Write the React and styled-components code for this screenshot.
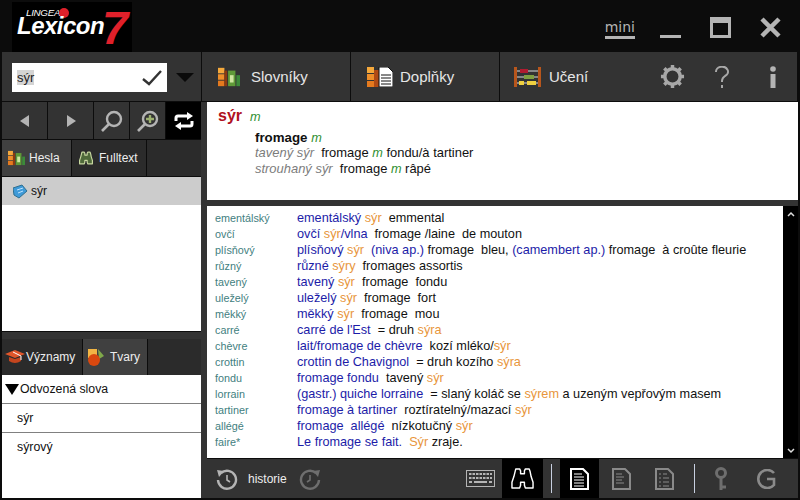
import React from "react";
import styled, { createGlobalStyle } from "styled-components";

const GlobalStyle = createGlobalStyle`
  html, body { margin: 0; padding: 0; background: #0c0c0c; }
  body { font-family: "Liberation Sans", Arial, sans-serif; }
`;

const Window = styled.div`
  width: 800px;
  height: 500px;
  overflow: hidden;
  background: #0c0c0c;
  display: flex;
  flex-direction: column;
`;

const TitleBar = styled.header`
  height: 52px;
  flex: none;
  display: flex;
  align-items: flex-start;
  padding-left: 12px;
`;

const Logo = styled.div`
  position: relative;
  width: 120px;
  height: 50px;
  margin-top: 2px;
  background: #000;
  color: #fff;
  font-style: italic;
  font-weight: bold;
`;

const LogoSmall = styled.span`
  position: absolute;
  left: 14px;
  top: 6px;
  font-size: 9.8px;
  line-height: 9px;
  font-weight: normal;
  letter-spacing: -0.3px;
`;

const LogoDot = styled.span`
  position: absolute;
  left: 47px;
  top: 6px;
  width: 10px;
  height: 10px;
  border-radius: 50%;
  background: #e0202a;
`;

const LogoName = styled.span`
  position: absolute;
  left: 5px;
  top: 15px;
  font-size: 24px;
  letter-spacing: -0.5px;
  line-height: 18px;
`;

const LogoSeven = styled.span`
  position: absolute;
  left: 90px;
  top: 9px;
  font-size: 47px;
  line-height: 33px;
  color: #e0202a;
`;

const WindowButtons = styled.div`
  margin-left: auto;
  display: flex;
  align-items: center;
  height: 54px;
  padding-right: 19px;
  gap: 29px;
`;

const Mini = styled.span`
  color: #b4b4b4;
  font: 14px "DejaVu Sans", sans-serif;
  line-height: 15px;
  padding-bottom: 1px;
  border-bottom: 3px solid #b4b4b4;
  margin-top: 4px;
  margin-right: -4px;
`;

const Body = styled.div`
  flex: none;
  height: 446px;
  width: 798px;
  margin-left: 2px;
  display: flex;
`;

const Side = styled.aside`
  width: 199px;
  flex: none;
  display: flex;
  flex-direction: column;
  background: #333;
`;

const SearchRow = styled.div`
  height: 49px;
  flex: none;
  display: flex;
  align-items: center;
  padding-left: 10px;
  gap: 9px;
  border-bottom: 1px solid #0c0c0c;
`;

const SearchBox = styled.div`
  width: 155px;
  height: 29px;
  background: #fff;
  display: flex;
  align-items: center;
  justify-content: space-between;
  padding: 0 5px;
  box-sizing: border-box;
  font-size: 13px;
  margin-top: 2px;
`;

const Selected = styled.span`
  background: #d4d4d4;
  color: #222;
`;

const DownArrow = styled.span`
  width: 0;
  height: 0;
  border-left: 9px solid transparent;
  border-right: 9px solid transparent;
  border-top: 9px solid #0a0a0a;
  margin-top: 2px;
`;

const NavRow = styled.div`
  height: 37px;
  flex: none;
  display: flex;
  border-bottom: 1px solid #0c0c0c;
`;

const NavButton = styled.div`
  width: ${(p) => p.$w}px;
  flex: none;
  display: flex;
  align-items: center;
  justify-content: center;
  box-sizing: border-box;
  background: ${(p) => (p.$active ? "#000" : "#333")};
  border-right: ${(p) => (p.$active ? "0" : "1px solid #0c0c0c")};
`;

const Tabs = styled.div`
  height: 36px;
  flex: none;
  display: flex;
  background: #2b2b2b;
`;

const Tab = styled.div`
  width: ${(p) => p.$w}px;
  flex: none;
  box-sizing: border-box;
  display: flex;
  align-items: center;
  gap: ${(p) => p.$gap ?? 6}px;
  padding-left: ${(p) => p.$pad ?? 6}px;
  color: #eee;
  font-size: 12px;
  background: ${(p) => (p.$on ? "#404040" : "#2b2b2b")};
  border-right: 1px solid #0c0c0c;
`;

const ListPane = styled.div`
  height: 156px;
  flex: none;
  background: #fff;
  border-top: 1px solid #0c0c0c;
  border-bottom: 1px solid #0c0c0c;
  box-sizing: border-box;
`;

const SelectedRow = styled.div`
  height: 28px;
  background: #ccc;
  display: flex;
  align-items: center;
  gap: 3px;
  padding-left: 11px;
  font-size: 12px;
  color: #111;
`;

const SideGap = styled.div`
  height: 7px;
  flex: none;
`;

const LowerList = styled.div`
  flex: 1;
  background: #fff;
  font-size: 12.3px;
  color: #111;
`;

const LowerRow = styled.div`
  height: 28px;
  display: flex;
  align-items: center;
  gap: 1px;
  padding-left: ${(p) => p.$pad}px;
  border-bottom: ${(p) => (p.$last ? "0" : "1px solid #808080")};
`;

const TriangleDown = styled.span`
  width: 0;
  height: 0;
  border-left: 7px solid transparent;
  border-right: 7px solid transparent;
  border-top: 11px solid #000;
  margin-left: -1px;
`;

const Main = styled.main`
  flex: 1;
  min-width: 0;
  display: flex;
  flex-direction: column;
`;

const Toolbar = styled.nav`
  height: 50px;
  flex: none;
  width: 596px;
  display: flex;
  align-items: center;
  background: #333;
  border-left: 1px solid #0c0c0c;
  box-sizing: border-box;
  border-bottom: 1px solid #0c0c0c;
`;

const ToolButton = styled.div`
  width: 149px;
  height: 49px;
  box-sizing: border-box;
  display: flex;
  align-items: center;
  gap: ${(p) => p.$gap}px;
  padding-left: ${(p) => p.$pad}px;
  color: #e6e6e6;
  font-size: 15px;
  border-right: ${(p) => (p.$last ? "0" : "1px solid #0c0c0c")};
`;

const ToolIcons = styled.div`
  margin-left: auto;
  display: flex;
  align-items: center;
  padding-right: 21px;
  gap: 29px;
  svg:last-child { margin-left: 11px; }
`;

const Panes = styled.div`
  flex: 1;
  min-height: 0;
  width: 597px;
  box-sizing: border-box;
  display: flex;
  flex-direction: column;
  padding-left: 6px;
  background: #333;
`;

const EntryPane = styled.section`
  height: 98px;
  width: 591px;
  flex: none;
  background: #fff;
  box-sizing: border-box;
  padding: 5px 0 0 11px;
  font-size: 13px;
  color: #111;
  margin-bottom: 6px;
`;

const HeadWord = styled.div`
  display: flex;
  align-items: baseline;
  gap: 8px;
  height: 23px;
  font-size: 16px;
  font-weight: bold;
  color: #b01020;
`;

const Gender = styled.i`
  color: #2f8f2f;
  font-size: 12.7px;
  font-weight: normal;
`;

const EntryLine = styled.div`
  height: 16px;
  line-height: 16px;
  padding-left: 37px;
  white-space: pre;
  font-size: ${(p) => (p.$big ? 13.3 : 12.95)}px;
  font-weight: ${(p) => (p.$big ? "bold" : "normal")};
  position: relative;
  top: ${(p) => (p.$big ? 0 : -1)}px;
`;

const Gray = styled.i`
  color: #7c7c7c;
`;

const ResultsWrap = styled.section`
  height: 252px;
  flex: none;
  display: flex;
`;

const Results = styled.div`
  flex: 1;
  background: #fff;
  padding: 4px 0 0 8px;
  overflow: hidden;
`;

const ResultRow = styled.div`
  height: 16px;
  line-height: 16px;
  display: grid;
  grid-template-columns: 82px 1fr;
  white-space: pre;
  font-size: 12.7px;
  color: #111;
`;

const Word = styled.span`
  color: #3f8080;
  font-size: 10.8px;
`;

const Blue = styled.span`
  color: #1c1ca8;
`;

const Org = styled.span`
  color: #e8963c;
`;

const Scrollbar = styled.div`
  width: 15px;
  flex: none;
  background: #000;
  display: flex;
  flex-direction: column;
  align-items: center;
  justify-content: space-between;
  padding: 5px 0 4px;
  box-sizing: border-box;
  color: #ddd;
`;

const StatusBar = styled.footer`
  flex: none;
  height: 40px;
  width: 591px;
  display: flex;
  align-items: stretch;
  background: #333;
  border-top: 1px solid #0c0c0c;
  box-sizing: border-box;
  padding: 0 5px 0 9px;
  color: #eee;
  font-size: 12px;
`;

const StatusItem = styled.div`
  display: flex;
  align-items: center;
  justify-content: center;
  width: ${(p) => p.$w}px;
  flex: none;
  margin-left: ${(p) => p.$ml ?? 0}px;
  background: ${(p) => (p.$active ? "#000" : "transparent")};
`;

const HistoryLabel = styled.span`
  width: 51px;
  display: flex;
  align-items: center;
  flex: none;
  margin-left: 10px;
`;

const Divider = styled.span`
  width: 1px;
  flex: none;
  background: #c8d0e0;
  margin: 5px 8px;
`;

const Spacer = styled.div`
  flex: 1;
`;

const Books = ({ w = 22, h = 20 }) => (
  <svg width={w} height={h} viewBox="0 0 24 20">
    <rect x="0" y="0" width="7" height="6" fill="#f5a93c" />
    <rect x="0" y="7" width="7" height="6" fill="#ef8f2a" />
    <rect x="0" y="14" width="7" height="6" fill="#e57a1e" />
    <rect x="7" y="3" width="3" height="17" fill="#8c3a10" />
    <rect x="11" y="3" width="8" height="17" fill="#5f9a38" />
    <rect x="13" y="8" width="4" height="8" fill="#cfe6a0" />
    <rect x="20" y="8" width="4" height="12" fill="#3d8a3a" />
  </svg>
);

const BooksDoc = () => (
  <svg width="26" height="20" viewBox="0 0 26 20">
    <rect x="0" y="0" width="7" height="6" fill="#f5a93c" />
    <rect x="0" y="7" width="7" height="6" fill="#ef8f2a" />
    <rect x="0" y="14" width="7" height="6" fill="#e57a1e" />
    <rect x="7" y="3" width="5" height="17" fill="#b04a14" />
    <path d="M12 0h9l5 5v15H12z" fill="#fff" stroke="#111" />
    <path d="M14 8h10M14 11h10M14 14h10M14 17h10" stroke="#111" />
  </svg>
);

const Abacus = () => (
  <svg width="27" height="20" viewBox="0 0 27 20">
    <rect x="0" y="0" width="3" height="20" fill="#b8561c" />
    <rect x="24" y="0" width="3" height="20" fill="#b8561c" />
    <path d="M3 4h21M3 10h21M3 16h21" stroke="#ddd" />
    <rect x="6" y="2" width="8" height="4" fill="#b01c30" />
    <rect x="10" y="8" width="10" height="4" fill="#7fa040" />
    <rect x="5" y="14" width="5" height="4" fill="#f0d040" />
    <rect x="13" y="14" width="9" height="4" fill="#f0d040" />
  </svg>
);

const Binoculars = ({ color, size, line, sw }) => (
  <svg width={size} height={size} viewBox="0 0 24 24" fill={color} stroke={line} strokeWidth={sw} strokeLinejoin="round">
    <path d="M5 2h4l1 2v3h4V4l1-2h4l1 3 1 5 2 6v6h-8l-1-3v-3h-4v3l-1 3H1v-6l2-6z" />
  </svg>
);

const Lens = ({ plus }) => (
  <svg width="24" height="24" viewBox="0 0 24 24" fill="none">
    <circle cx="14" cy="10" r="7" stroke="#b4b4b4" strokeWidth="2.4" />
    {plus && <path d="M14 6v8M10 10h8" stroke="#9cb070" strokeWidth="2.4" />}
    <path d="M9 15 2 22" stroke="#b4b4b4" strokeWidth="2.6" />
  </svg>
);

const Doc = ({ color, lines }) => (
  <svg width="19" height="22" viewBox="0 0 19 22" fill="none">
    <path d="M1 1h12l5 5v15H1z" stroke={color} strokeWidth="2" />
    <path d={lines} stroke={color} strokeWidth="1" />
  </svg>
);

const Clock = ({ color, flip }) => (
  <svg width="22" height="22" viewBox="0 0 22 22" fill="none" style={flip ? { transform: "scaleX(-1)" } : undefined}>
    <path d="M5 5a9 9 0 1 1-3 7" stroke={color} strokeWidth="2.4" />
    <path d="M1 2l7 1-5 6z" fill={color} />
    <path d="M11 7v5l3 2" stroke={color} strokeWidth="1.6" />
  </svg>
);

const rows = [
  ["ementálský", <><Blue>ementálský </Blue><Org>sýr</Org>  emmental</>],
  ["ovčí", <><Blue>ovčí </Blue><Org>sýr</Org><Blue>/vlna</Blue>  fromage /laine  de mouton</>],
  ["plísňový", <><Blue>plísňový </Blue><Org>sýr</Org>  <Blue>(niva ap.) </Blue>fromage  bleu, <Blue>(camembert ap.) </Blue>fromage  à croûte fleurie</>],
  ["různý", <><Blue>různé </Blue><Org>sýry</Org>  fromages assortis</>],
  ["tavený", <><Blue>tavený </Blue><Org>sýr</Org>  fromage  fondu</>],
  ["uleželý", <><Blue>uleželý </Blue><Org>sýr</Org>  fromage  fort</>],
  ["měkký", <><Blue>měkký </Blue><Org>sýr</Org>  fromage  mou</>],
  ["carré", <><Blue>carré de l'Est</Blue>  = druh <Org>sýra</Org></>],
  ["chèvre", <><Blue>lait/fromage de chèvre</Blue>  kozí mléko/<Org>sýr</Org></>],
  ["crottin", <><Blue>crottin de Chavignol</Blue>  = druh kozího <Org>sýra</Org></>],
  ["fondu", <><Blue>fromage fondu</Blue>  tavený <Org>sýr</Org></>],
  ["lorrain", <><Blue>(gastr.) quiche lorraine</Blue>  = slaný koláč se <Org>sýrem</Org> a uzeným vepřovým masem</>],
  ["tartiner", <><Blue>fromage à tartiner</Blue>  roztíratelný/mazací <Org>sýr</Org></>],
  ["allégé", <><Blue>fromage  allégé</Blue>  nízkotučný <Org>sýr</Org></>],
  ["faire*", <><Blue>Le fromage se fait.</Blue>  <Org>Sýr</Org> zraje.</>],
];

const App = () => {
  return (
    <Window>
      <GlobalStyle />
      <TitleBar>
        <Logo>
          <LogoSmall>LINGEA</LogoSmall>
          <LogoDot />
          <LogoName>Lexicon</LogoName>
          <LogoSeven>7</LogoSeven>
        </Logo>
        <WindowButtons>
          <Mini>mini</Mini>
          <svg width="21" height="21" viewBox="0 0 21 21"><rect y="18" width="21" height="3" fill="#b4b4b4" /></svg>
          <svg width="21" height="21" viewBox="0 0 21 21"><path d="M0 0h21v21H0z" fill="#b4b4b4" /><rect x="3" y="6" width="15" height="12" fill="#0c0c0c" /></svg>
          <svg width="21" height="21" viewBox="0 0 21 21"><path d="M2 2l17 17M19 2 2 19" stroke="#b4b4b4" strokeWidth="4.5" /></svg>
        </WindowButtons>
      </TitleBar>
      <Body>
        <Side>
          <SearchRow>
            <SearchBox>
              <span><Selected>sýr</Selected></span>
              <svg width="20" height="16" viewBox="0 0 20 16" fill="none"><path d="M1 9l6 5L19 1" stroke="#333" strokeWidth="2.4" /></svg>
            </SearchBox>
            <DownArrow />
          </SearchRow>
          <NavRow>
            <NavButton $w={46}>
              <svg width="10" height="12" viewBox="0 0 10 12"><path d="M9 0v12L0 6z" fill="#b4b4b4" /></svg>
            </NavButton>
            <NavButton $w={46}>
              <svg width="10" height="12" viewBox="0 0 10 12"><path d="M1 0v12l9-6z" fill="#b4b4b4" /></svg>
            </NavButton>
            <NavButton $w={36}><Lens /></NavButton>
            <NavButton $w={36}><Lens plus /></NavButton>
            <NavButton $w={35} $active>
              <svg width="20" height="18" viewBox="0 0 20 18" fill="none">
                <path d="M2 9V6q0-2 2-2h10" stroke="#fff" strokeWidth="3" />
                <path d="M13 0l6 4-6 4z" fill="#fff" />
                <path d="M18 9v3q0 2-2 2H6" stroke="#fff" strokeWidth="3" />
                <path d="M7 10l-6 4 6 4z" fill="#fff" />
              </svg>
            </NavButton>
          </NavRow>
          <Tabs>
            <Tab $w={70} $on $gap={4}><Books w={17} h={16} />Hesla</Tab>
            <Tab $w={75} $pad={7} $gap={6}><Binoculars color="#4f6a3a" size={14} line="#c8d8a0" sw={2} />Fulltext</Tab>
          </Tabs>
          <ListPane>
            <SelectedRow>
              <svg width="15" height="15" viewBox="0 0 15 15"><path d="M0 4l9-3 5 6-8 7-5-3z" fill="#3f9ad8" stroke="#2f6f90" /><path d="M4 6l6-2M5 9l5-2" stroke="#bfe4ff" /></svg>
              sýr
            </SelectedRow>
          </ListPane>
          <SideGap />
          <Tabs>
            <Tab $w={81} $gap={1} $pad={3}>
              <svg width="20" height="14" viewBox="0 0 20 14"><path d="M0 4l10-4 10 4-10 4z" fill="#e0562a" /><path d="M4 7v4q6 4 12 0V7l-6 2z" fill="#c4451e" /><path d="M8 2l8 4v4" stroke="#fff" fill="none" /></svg>
              Významy
            </Tab>
            <Tab $w={65} $on $gap={6} $pad={5}>
              <svg width="16" height="17" viewBox="0 0 16 17">
                <rect x="0" y="0" width="9" height="9" fill="#f2b544" />
                <path d="M10 0l6 7-5 3z" fill="#7fa84a" />
                <circle cx="6" cy="11" r="6" fill="#d9480f" />
              </svg>
              Tvary
            </Tab>
          </Tabs>
          <LowerList>
            <LowerRow $pad={4}><TriangleDown />Odvozená slova</LowerRow>
            <LowerRow $pad={15}>sýr</LowerRow>
            <LowerRow $pad={15} $last>sýrový</LowerRow>
          </LowerList>
        </Side>
        <Main>
          <Toolbar>
            <ToolButton $pad={16} $gap={11}><Books />Slovníky</ToolButton>
            <ToolButton $pad={16} $gap={7}><BooksDoc />Doplňky</ToolButton>
            <ToolButton $pad={14} $gap={8} $last><Abacus />Učení</ToolButton>
            <ToolIcons>
              <svg width="25" height="25" viewBox="0 0 26 26" fill="none">
                <circle cx="13" cy="13" r="8" stroke="#a8a8a8" strokeWidth="3.6" />
                <path d="M13 1v4M13 21v4M1 13h4M21 13h4M4.500 4.500l3 3M18.500 18.500l3 3M21.500 4.500l-3 3M7.500 18.500l-3 3" stroke="#a8a8a8" strokeWidth="3.6" />
              </svg>
              <svg width="16" height="22" viewBox="0 0 16 22" fill="none">
                <path d="M2 6a6 5 0 1 1 9 4q-3 2-3 5v1" stroke="#a8a8a8" strokeWidth="2" />
                <rect x="7" y="19" width="2" height="3" fill="#a8a8a8" />
              </svg>
              <svg width="6" height="22" viewBox="0 0 6 22">
                <circle cx="3" cy="3" r="2.800" fill="#b4b4b4" />
                <rect x="0.500" y="8" width="5" height="14" fill="#b4b4b4" />
              </svg>
            </ToolIcons>
          </Toolbar>
          <Panes>
            <EntryPane>
              <HeadWord>sýr <Gender>m</Gender></HeadWord>
              <EntryLine $big>fromage <Gender>m</Gender></EntryLine>
              <EntryLine><Gray>tavený sýr</Gray>  fromage <Gender>m</Gender> fondu/à tartiner</EntryLine>
              <EntryLine><Gray>strouhaný sýr</Gray>  fromage <Gender>m</Gender> râpé</EntryLine>
            </EntryPane>
            <ResultsWrap>
              <Results>
                {rows.map(([word, text]) => (
                  <ResultRow key={word}>
                    <Word>{word}</Word>
                    <span>{text}</span>
                  </ResultRow>
                ))}
              </Results>
              <Scrollbar>
                <svg width="8" height="6" viewBox="0 0 8 6" fill="none"><path d="M1 5l3-3 3 3" stroke="#ddd" strokeWidth="1.500" /></svg>
                <svg width="8" height="6" viewBox="0 0 8 6" fill="none"><path d="M1 1l3 3 3-3" stroke="#ddd" strokeWidth="1.500" /></svg>
              </Scrollbar>
            </ResultsWrap>
            <StatusBar>
              <StatusItem $w={22}><Clock color="#b4b4b4" /></StatusItem>
              <HistoryLabel>historie</HistoryLabel>
              <StatusItem $w={22}><Clock color="#6e6e6e" flip /></StatusItem>
              <Spacer />
              <StatusItem $w={36}>
                <svg width="29" height="17" viewBox="0 0 29 17" fill="none">
                  <rect x="0.500" y="0.500" width="28" height="16" stroke="#b4b4b4" />
                  <path d="M3 4h23M3 8h23" stroke="#b4b4b4" strokeWidth="2" strokeDasharray="2.500 1" />
                  <path d="M3 12h3M8 12h13M23 12h3" stroke="#b4b4b4" strokeWidth="2" />
                </svg>
              </StatusItem>
              <StatusItem $w={41} $ml={4} $active>
                <Binoculars color="#000" size={23} line="#fff" sw={1.5} />
              </StatusItem>
              <Divider />
              <StatusItem $w={39} $active>
                <Doc color="#fff" lines="M4 6h8M4 9h10M4 12h10M4 15h10M4 18h10" />
              </StatusItem>
              <StatusItem $w={44}>
                <Doc color="#8a8a8a" lines="M4 6h6M4 9h8M4 12h6M4 15h8" />
              </StatusItem>
              <StatusItem $w={43}>
                <Doc color="#8a8a8a" lines="M4 6h2M8 6h4M4 10h2M8 10h6M4 14h2M8 14h6M4 18h2M8 18h6" />
              </StatusItem>
              <Divider />
              <StatusItem $w={36}>
                <svg width="14" height="24" viewBox="0 0 14 24" fill="none">
                  <circle cx="7" cy="6" r="4.500" stroke="#6e6e6e" strokeWidth="3" />
                  <path d="M7 10v13M7 20h5" stroke="#6e6e6e" strokeWidth="3" />
                </svg>
              </StatusItem>
              <StatusItem $w={54}>
                <svg width="20" height="20" viewBox="0 0 20 20" fill="none">
                  <path d="M18 4a9 9 0 1 0 0 12v-6h-7" stroke="#8a8a8a" strokeWidth="2.600" />
                </svg>
              </StatusItem>
            </StatusBar>
          </Panes>
        </Main>
      </Body>
    </Window>
  );
};

export default App;
